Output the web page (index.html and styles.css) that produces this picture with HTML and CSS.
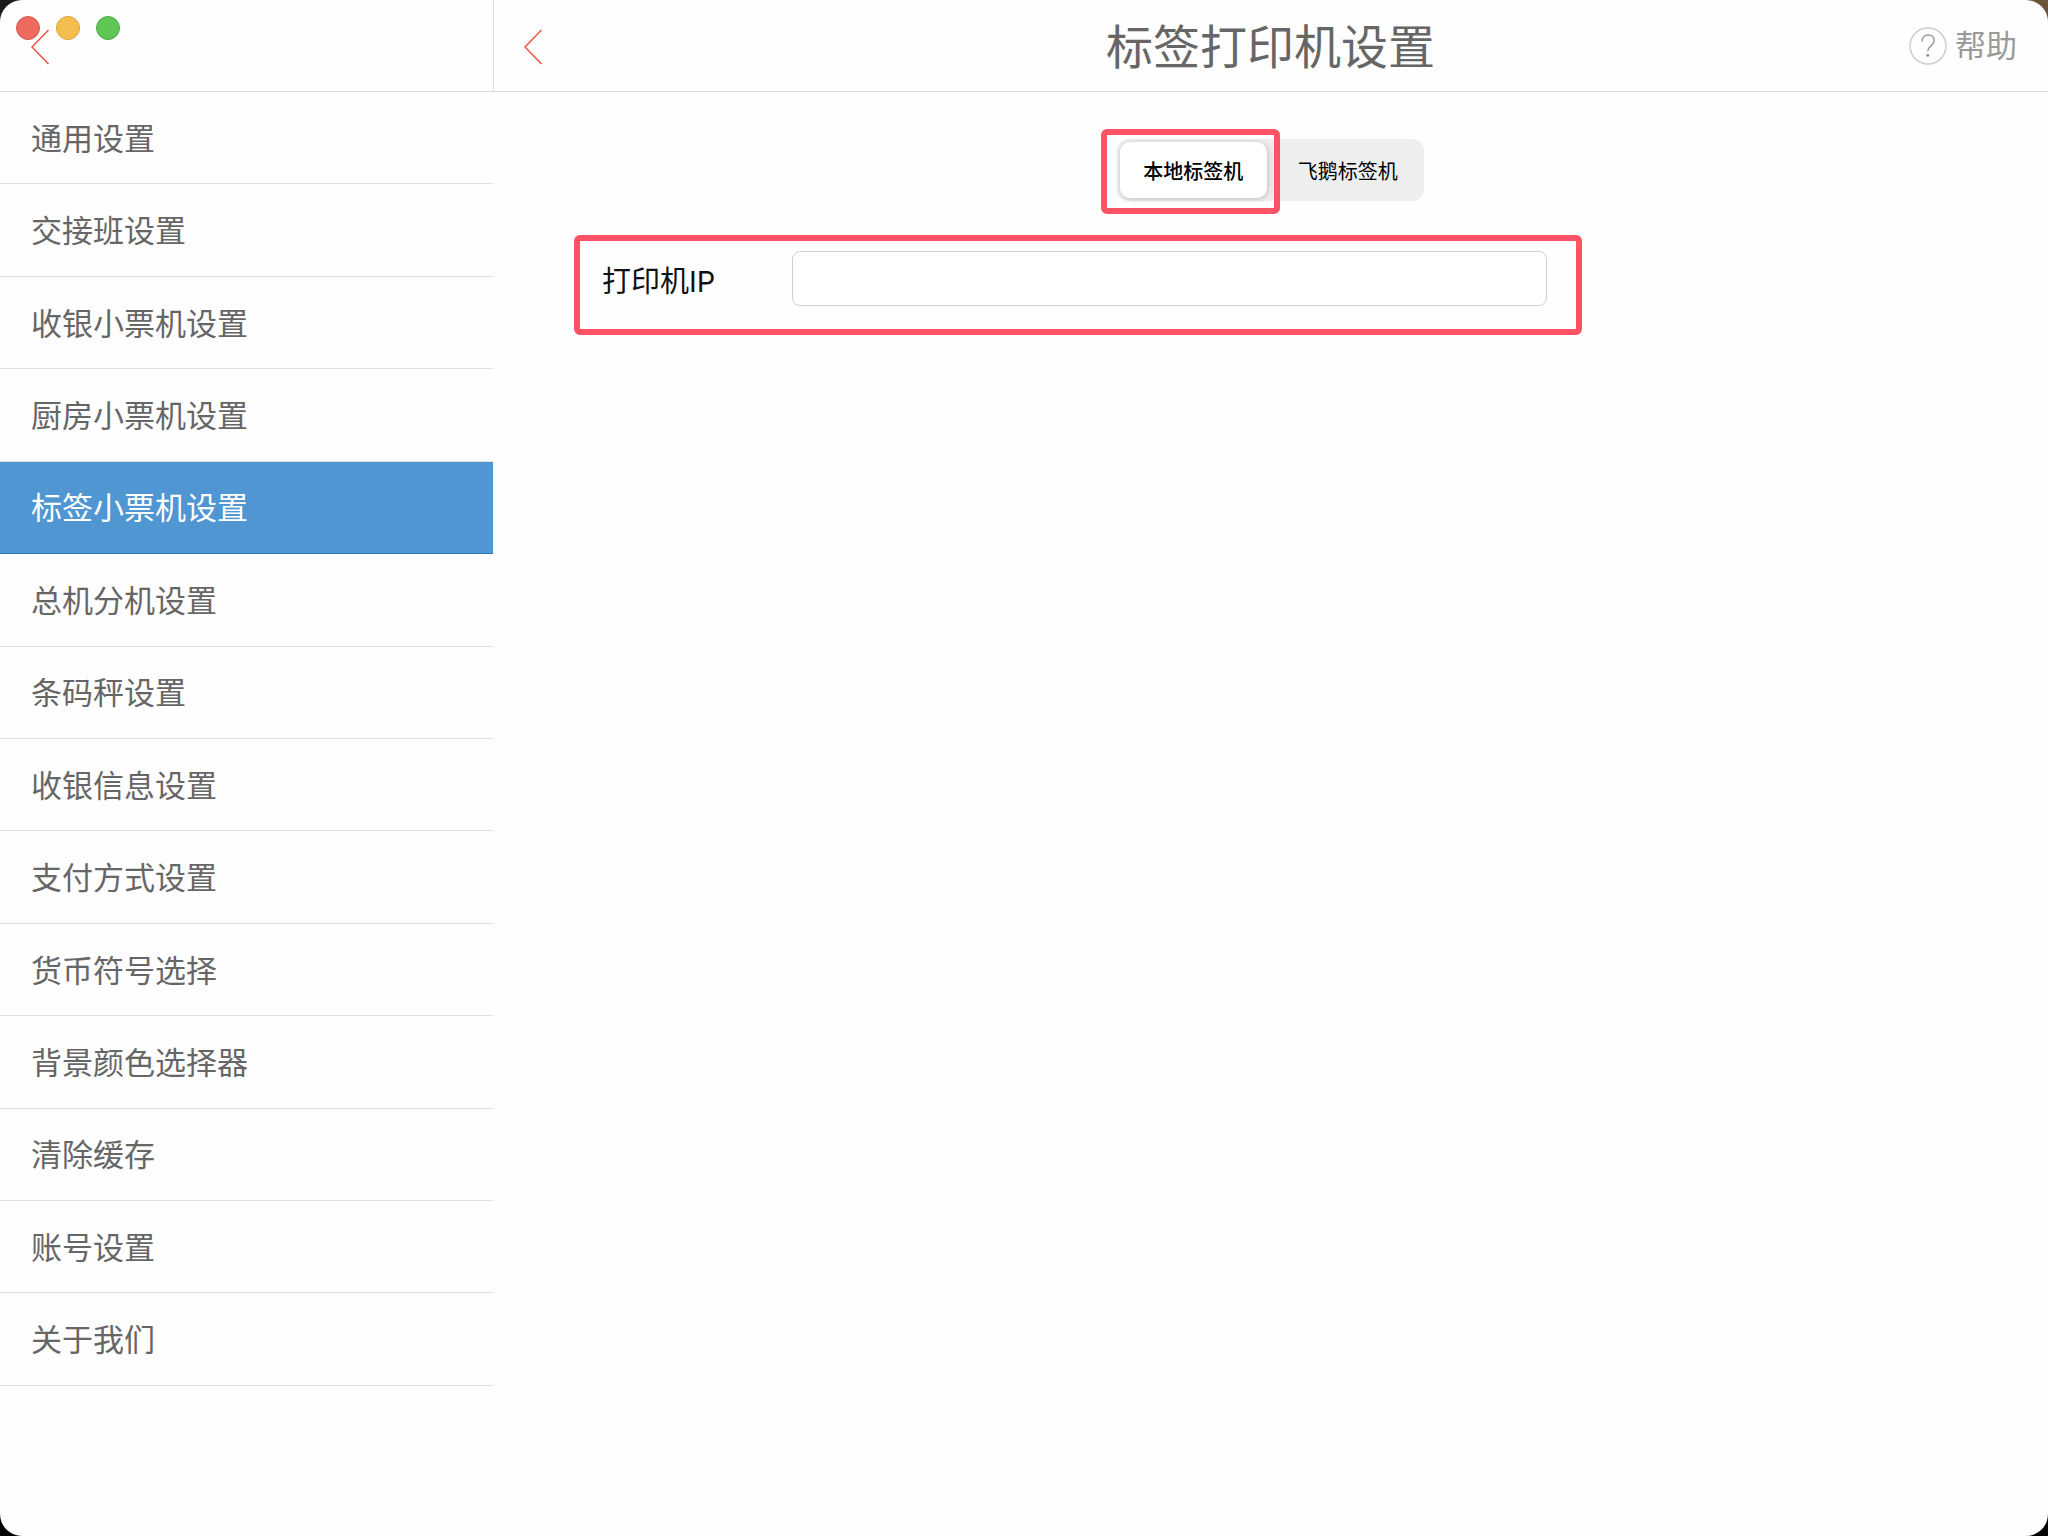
FILE: index.html
```
<!DOCTYPE html>
<html lang="zh-CN">
<head>
    <meta charset="UTF-8">
    <meta name="viewport" content="width=device-width, initial-scale=1.0">
    <title>标签打印机设置</title>
    <link rel="stylesheet" href="styles.css">
</head>
<body>
    <div class="window">
        <div class="window-controls">
            <button class="dot close" aria-label="关闭"></button>
            <button class="dot minimize" aria-label="最小化"></button>
            <button class="dot zoom" aria-label="缩放"></button>
        </div>

        <aside class="sidebar">
            <div class="sidebar-header">
                <button class="back" aria-label="返回">
                    <svg width="19" height="36" viewBox="0 0 19 36"><path d="M17.5 1L1 18L17.5 35"/></svg>
                </button>
            </div>
            <nav class="menu">
                <a href="#">通用设置</a>
                <a href="#">交接班设置</a>
                <a href="#">收银小票机设置</a>
                <a href="#">厨房小票机设置</a>
                <a href="#" class="active">标签小票机设置</a>
                <a href="#">总机分机设置</a>
                <a href="#">条码秤设置</a>
                <a href="#">收银信息设置</a>
                <a href="#">支付方式设置</a>
                <a href="#">货币符号选择</a>
                <a href="#">背景颜色选择器</a>
                <a href="#">清除缓存</a>
                <a href="#">账号设置</a>
                <a href="#">关于我们</a>
            </nav>
        </aside>

        <main class="main">
            <header class="main-header">
                <button class="back" aria-label="返回">
                    <svg width="19" height="36" viewBox="0 0 19 36"><path d="M17.5 1L1 18L17.5 35"/></svg>
                </button>
                <h1>标签打印机设置</h1>
                <a href="#" class="help">
                    <svg width="38" height="38" viewBox="0 0 38 38">
                        <circle class="ring" cx="19" cy="19" r="18"/>
                        <path class="mark" d="M13 14.5C13 10.5 15.5 8 19 8C22.700 8 25.200 10.300 25.200 13.600C25.200 18.500 18.800 18.800 18.800 24.200"/>
                        <circle class="point" cx="18.800" cy="28.300" r="1.500"/>
                    </svg>
                    <span>帮助</span>
                </a>
            </header>

            <div class="tabs">
                <button class="tab selected">本地标签机</button>
                <button class="tab">飞鹅标签机</button>
            </div>

            <div class="field">
                <label for="printerIp">打印机IP</label>
                <input type="text" id="printerIp" spellcheck="false">
            </div>
        </main>
    </div>
</body>
</html>
```

FILE: styles.css
```
* {
    box-sizing: border-box;
}
html {
    background: linear-gradient(to right, #1a1a1a 50%, #6b543c 50%) top / 100% 50% no-repeat #000;
}
body {
    margin: 0;
    font-family: Inter, "Noto Sans CJK SC", sans-serif;
    color: #666;
}
button {
    padding: 0;
    border: none;
    background: none;
    font-family: inherit;
    cursor: pointer;
}
a {
    color: inherit;
    text-decoration: none;
}
.window {
    position: relative;
    display: flex;
    min-height: 100vh;
    background: #fefefe;
    border-radius: 22px;
    overflow: hidden;
}

/* window buttons float over the sidebar header */
.window-controls {
    position: absolute;
    top: 16px;
    left: 16px;
    display: flex;
    gap: 16px;
}
.dot {
    width: 24px;
    height: 24px;
    border: 1px solid;
    border-radius: 50%;
}
.close {
    background: #ec6a5e;
    border-color: #d5584d;
}
.minimize {
    background: #f5bf4f;
    border-color: #d9a33e;
}
.zoom {
    background: #61c554;
    border-color: #4fab42;
}

.sidebar {
    display: flex;
    flex-direction: column;
    flex: 0 0 493px;
}
.sidebar-header {
    display: flex;
    align-items: center;
    height: 92px;
    padding: 2px 0 0 31px;
    border-bottom: 1px solid #dcdcdc;
}
/* the arrow is drawn above the window buttons */
.back {
    position: relative;
    display: flex;
}
.back svg {
    fill: none;
    stroke: #ee4f46;
    stroke-width: 1.5;
}
.menu {
    display: flex;
    flex-direction: column;
    flex: 1;
    margin-bottom: 150px;
}
.menu a {
    display: flex;
    flex: 1;
    align-items: center;
    padding: 0 31px 3px;
    border-bottom: 1px solid #e0e0e0;
    font-size: 31px;
}
.menu .active {
    background: #4f96d2;
    border-color: #2f79bb;
    color: #fff;
}

.main {
    flex: 1;
}
.main-header {
    display: grid;
    grid-template-columns: 1fr auto 1fr;
    align-items: center;
    height: 92px;
    padding: 2px 31px 0 30px;
    border-left: 1px solid #dcdcdc;
    border-bottom: 1px solid #dcdcdc;
}
h1 {
    margin: 0;
    font-size: 47px;
    font-weight: 400;
    line-height: 64px;
}
.help {
    display: flex;
    align-items: center;
    justify-self: end;
    gap: 8px;
    padding-bottom: 2px;
    color: #999;
    font-size: 31px;
    line-height: 36px;
}
.help svg {
    fill: none;
}
.ring {
    stroke: #ccc;
    stroke-width: 1.5;
}
.mark {
    stroke: #999;
    stroke-width: 1.5;
}
.point {
    fill: #999;
}

.tabs {
    display: flex;
    gap: 8px;
    width: 307px;
    height: 62px;
    margin: 47px auto 34px;
    padding: 3px;
    background: #eee;
    border-radius: 12px;
}
.tab {
    position: relative;
    flex: 1;
    border-radius: 10px;
    color: #000;
    font-size: 20px;
}
.selected {
    background: #fff;
    box-shadow: 1px 1px 6px rgba(0, 0, 0, 0.2);
    font-weight: 500;
}
/* red frame round the selected tab */
.selected::after {
    content: "";
    position: absolute;
    inset: -13px -13px -16px -19px;
    border: 6px solid #ff5264;
    border-radius: 6px;
    pointer-events: none;
}

.field {
    display: flex;
    align-items: center;
    margin: 0 30% 0 81px;
    padding: 10px 29px 23px 22px;
    border: 6px solid #ff5264;
    border-radius: 6px;
}
.field label {
    flex: 0 0 190px;
    color: #111;
    font-size: 29px;
}
.field input {
    flex: 1;
    height: 55px;
    padding: 0 12px;
    border: 1px solid #d0d0d0;
    border-radius: 8px;
    background: #fff;
    font-family: inherit;
    font-size: 29px;
}
```
